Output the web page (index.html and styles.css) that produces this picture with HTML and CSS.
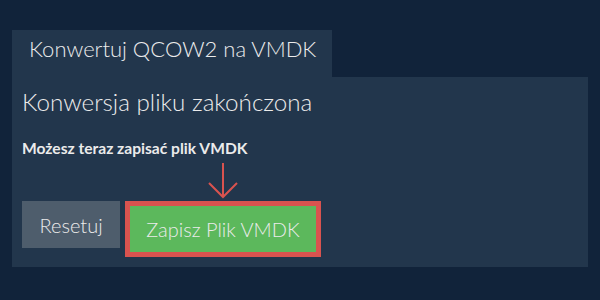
FILE: index.html
```html
<!DOCTYPE html>
<html lang="pl">
<head>
    <meta charset="UTF-8">
    <title>Konwertuj QCOW2 na VMDK</title>
    <link rel="stylesheet" href="styles.css">
</head>
<body>
    <div class="container">
        <div class="tab">Konwertuj QCOW2 na VMDK</div>
        <div class="panel">
            <h2 class="title">Konwersja pliku zakończona</h2>
            <p class="message">Możesz teraz zapisać plik VMDK</p>
            <div class="actions">
                <svg class="arrow" width="30" height="38" viewBox="0 0 30 38" fill="none" xmlns="http://www.w3.org/2000/svg">
                    <path d="M15 2V36" stroke="#d9534f" stroke-width="2" />
                    <path d="M1 22L15 36L29 22" stroke="#d9534f" stroke-width="2" />
                </svg>
                <button class="btn btn-reset">Resetuj</button>
                <button class="btn btn-save">Zapisz Plik VMDK</button>
            </div>
        </div>
    </div>
</body>
</html>
```

FILE: styles.css
```css
:root {
    --background-color: #11233a;
    --panel-color: #22364c;
    --text-color: #ebebeb;
    --reset-color: #4e5d6c;
    --save-color: #5cb85c;
    --accent-color: #d9534f;
}
body {
    margin: 0;
    background-color: var(--background-color);
    color: var(--text-color);
    font-family: Lato, sans-serif;
}
.container {
    padding: 30px 12px;
}
.tab {
    display: inline-block;
    background-color: var(--panel-color);
    font-size: 22px;
    font-weight: 300;
    line-height: 26px;
    padding: 6px 16px 15px 17px;
}
.panel {
    background-color: var(--panel-color);
    padding: 10px;
}
.title {
    margin: 0;
    font-size: 24.2px;
    font-weight: 300;
    line-height: 29px;
}
.message {
    margin: 24px 0 0 0;
    font-size: 15.6px;
    font-weight: bold;
    line-height: 17px;
}
/* strzałka nad przyciskiem zapisu */
.actions {
    display: grid;
    grid-template-columns: auto auto;
    justify-content: start;
    align-items: start;
    column-gap: 5px;
    row-gap: 2px;
    margin-top: 4px;
}
.arrow {
    display: block;
    grid-column: 2;
    grid-row: 1;
    justify-self: center;
}
.btn {
    grid-row: 2;
    font-family: inherit;
    font-size: 20px;
    font-weight: 300;
    line-height: 24px;
    color: var(--text-color);
    border: none;
    border-radius: 0;
    cursor: pointer;
}
.btn-reset {
    grid-column: 1;
    background-color: var(--reset-color);
    padding: 12px 17.5px 11px 17.5px;
}
.btn-save {
    grid-column: 2;
    background-color: var(--save-color);
    border: 5px solid var(--accent-color);
    padding: 11px 16px;
}
```
